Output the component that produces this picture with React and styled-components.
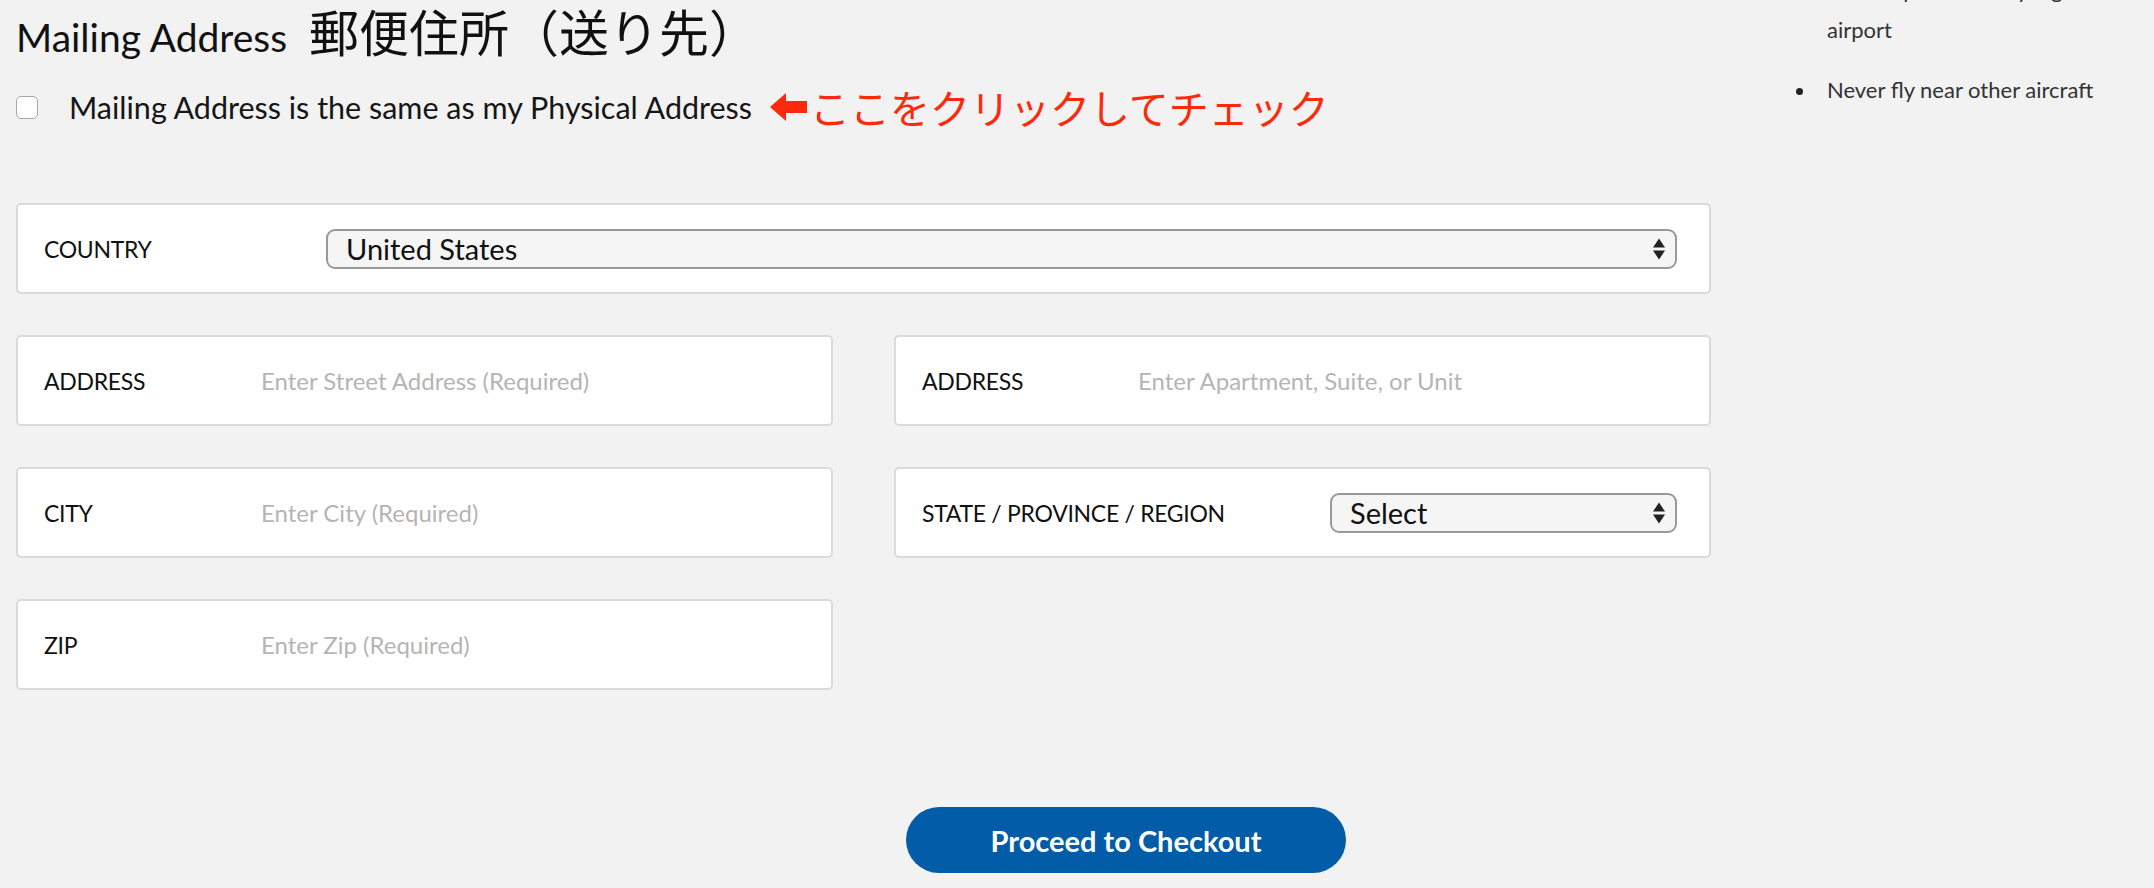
import React from 'react';
import styled, { createGlobalStyle } from 'styled-components';

const GlobalStyle = createGlobalStyle`
  body {
    margin: 0;
    background: #f2f2f2;
    font-family: Lato, "Noto Sans", "Noto Sans CJK JP", sans-serif;
    color: #1a1a1a;
  }
`;

const SelectArrows = () => (
  <svg width='14' height='24' viewBox='0 0 14 24'>
    <path d='M7 1.5 L13 10.5 L1 10.5 Z' fill='#222' />
    <path d='M1 13.5 L13 13.5 L7 22.5 Z' fill='#222' />
  </svg>
);

const RedArrow = () => (
  <svg width='37' height='28' viewBox='0 0 37 28'>
    <path d='M0 14 L16 0 L16 8 L37 8 L37 20 L16 20 L16 28 Z' fill='#fb2a0c' />
  </svg>
);

const Field = ({ label, labelWidth, placeholder, span }) => (
  <Card span={span}>
    <Label width={labelWidth}>{label}</Label>
    <TextInput placeholder={placeholder} />
  </Card>
);

const SelectField = ({ label, labelWidth, value, span }) => (
  <Card span={span}>
    <Label width={labelWidth}>{label}</Label>
    <SelectBox>
      <span>{value}</span>
      <SelectArrows />
    </SelectBox>
  </Card>
);

export default function App() {
  return (
    <Page>
      <GlobalStyle />
      <Main>
        <Title>
          <span>Mailing Address</span>
          <Cjk>郵便住所（送り先）</Cjk>
        </Title>
        <CheckRow>
          <CheckBox />
          <CheckLabel>Mailing Address is the same as my Physical Address</CheckLabel>
          <Hint>
            <RedArrow />
            <span>ここをクリックしてチェック</span>
          </Hint>
        </CheckRow>

        <FormGrid>
          <SelectField span label='COUNTRY' labelWidth={282} value='United States' />
          <Field label='ADDRESS' labelWidth={217} placeholder='Enter Street Address (Required)' />
          <Field label='ADDRESS' labelWidth={216} placeholder='Enter Apartment, Suite, or Unit' />
          <Field label='CITY' labelWidth={217} placeholder='Enter City (Required)' />
          <SelectField label='STATE / PROVINCE / REGION' labelWidth={408} value='Select' />
          <Field label='ZIP' labelWidth={217} placeholder='Enter Zip (Required)' />
        </FormGrid>

        <ButtonRow>
          <CheckoutButton>Proceed to Checkout</CheckoutButton>
        </ButtonRow>
      </Main>

      <Sidebar>
        <Tip>
          <Bullet />
          <span>
            Never operate in any big
            <br />
            airport
          </span>
        </Tip>
        <Tip>
          <Bullet />
          <span>Never fly near other aircraft</span>
        </Tip>
      </Sidebar>
    </Page>
  );
}

const Page = styled.div`
  display: flex;
  padding-left: 16px;
  width: 2154px;
  height: 888px;
  box-sizing: border-box;
  overflow: hidden;
`;
const Main = styled.div`
  width: 1696px;
  flex-shrink: 0;
  display: flex;
  flex-direction: column;
`;
const Title = styled.h1`
  margin: 0;
  height: 72px;
  display: flex;
  align-items: baseline;
  gap: 22px;
  font-size: 39px;
  line-height: normal;
  font-weight: 400;
  color: #111;
  white-space: nowrap;
`;
const Cjk = styled.span`
  font-family: "Noto Sans CJK JP", sans-serif;
  font-size: 50px;
  line-height: 1.2;
  font-weight: 400;
`;
const CheckRow = styled.div`
  display: flex;
  align-items: center;
  height: 70px;
`;
const CheckBox = styled.span`
  width: 22px;
  height: 23px;
  box-sizing: border-box;
  border: 1.5px solid #a8a8a8;
  border-radius: 5px;
  background: #fff;
  margin-right: 31px;
`;
const CheckLabel = styled.span`
  font-size: 30.5px;
  color: #161616;
`;
const Hint = styled.span`
  display: flex;
  align-items: center;
  gap: 3px;
  margin-left: 18px;
  color: #fb2a0c;
  font-family: "Noto Sans CJK JP", sans-serif;
  font-size: 40px;
`;
const FormGrid = styled.div`
  margin-top: 61px;
  display: grid;
  grid-template-columns: 817px 817px;
  column-gap: 61px;
  row-gap: 41px;
  align-items: start;
`;
const Card = styled.div`
  grid-column: ${(p) => (p.span ? '1 / -1' : 'auto')};
  height: 91px;
  box-sizing: border-box;
  display: flex;
  align-items: center;
  padding: 0 32px 0 26px;
  background: #fff;
  border: 2px solid #dadada;
  border-radius: 5px;
`;
const Label = styled.div`
  width: ${(p) => p.width}px;
  flex-shrink: 0;
  font-size: 23px;
  color: #111;
  letter-spacing: -0.3px;
`;
const TextInput = styled.input`
  flex: 1;
  border: none;
  outline: none;
  background: transparent;
  font-family: Lato, sans-serif;
  font-size: 24px;
  color: #333;
  padding: 0;
  &::placeholder {
    color: #b5b5b5;
  }
`;
const SelectBox = styled.div`
  flex: 1;
  height: 40px;
  box-sizing: border-box;
  display: flex;
  align-items: center;
  justify-content: space-between;
  padding: 0 9px 0 18px;
  border: 2px solid #999;
  border-radius: 9px;
  background: #f5f5f5;
  font-size: 29px;
  color: #111;
`;
const ButtonRow = styled.div`
  margin-top: 117px;
  display: flex;
`;
const CheckoutButton = styled.button`
  margin-left: 890px;
  width: 440px;
  height: 66px;
  border: none;
  border-radius: 33px;
  background: #025ca8;
  color: #fff;
  font-family: Lato, sans-serif;
  font-size: 29px;
  font-weight: 700;
  cursor: pointer;
`;
const Sidebar = styled.ul`
  list-style: none;
  margin: -30px 0 0 84px;
  padding: 0;
  display: flex;
  flex-direction: column;
  gap: 20px;
  font-size: 22px;
  line-height: 40px;
  color: #333;
`;
const Tip = styled.li`
  display: flex;
  align-items: flex-start;
`;
const Bullet = styled.span`
  width: 7px;
  height: 7px;
  margin-top: 18px;
  margin-right: 24px;
  border-radius: 50%;
  background: #222;
  flex-shrink: 0;
`;
